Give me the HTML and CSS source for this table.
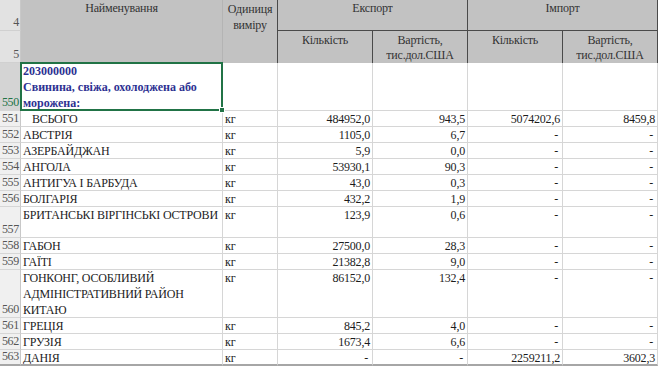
FILE: index.html
```html
<!DOCTYPE html>
<html>
<head>
<meta charset="utf-8">
<link rel="stylesheet" href="styles.css">
</head>
<body>
<div class="sheet">
  <div class="c rh rh-top r1">4</div>
  <div class="c hd hd-a">Найменування</div>
  <div class="c hd hd-b">Одиниця<br>виміру</div>
  <div class="c hd hd-grp hd-exp">Експорт</div>
  <div class="c hd hd-grp hd-imp">Імпорт</div>
  <div class="c rh rh-top r2">5</div>
  <div class="c hd hd-sub">Кількість</div>
  <div class="c hd hd-sub">Вартість,<br>тис.дол.США</div>
  <div class="c hd hd-sub">Кількість</div>
  <div class="c hd hd-sub">Вартість,<br>тис.дол.США</div>

  <div class="c rh rh-sel">550</div>
  <div class="c name group">203000000<br>Свинина, свіжа, охолоджена або<br>морожена:<span class="sel"><span class="handle"></span></span></div>
  <div class="c"></div><div class="c"></div><div class="c"></div><div class="c"></div><div class="c"></div>

  <div class="c rh">551</div><div class="c name total">ВСЬОГО</div><div class="c unit">кг</div><div class="c num">484952,0</div><div class="c num">943,5</div><div class="c num">5074202,6</div><div class="c num">8459,8</div>
  <div class="c rh">552</div><div class="c name">АВСТРІЯ</div><div class="c unit">кг</div><div class="c num">1105,0</div><div class="c num">6,7</div><div class="c num dash">-</div><div class="c num dash">-</div>
  <div class="c rh">553</div><div class="c name">АЗЕРБАЙДЖАН</div><div class="c unit">кг</div><div class="c num">5,9</div><div class="c num">0,0</div><div class="c num dash">-</div><div class="c num dash">-</div>
  <div class="c rh">554</div><div class="c name">АНГОЛА</div><div class="c unit">кг</div><div class="c num">53930,1</div><div class="c num">90,3</div><div class="c num dash">-</div><div class="c num dash">-</div>
  <div class="c rh">555</div><div class="c name">АНТИГУА І БАРБУДА</div><div class="c unit">кг</div><div class="c num">43,0</div><div class="c num">0,3</div><div class="c num dash">-</div><div class="c num dash">-</div>
  <div class="c rh">556</div><div class="c name">БОЛГАРІЯ</div><div class="c unit">кг</div><div class="c num">432,2</div><div class="c num">1,9</div><div class="c num dash">-</div><div class="c num dash">-</div>
  <div class="c rh">557</div><div class="c name">БРИТАНСЬКІ ВІРГІНСЬКІ ОСТРОВИ</div><div class="c unit">кг</div><div class="c num">123,9</div><div class="c num">0,6</div><div class="c num dash">-</div><div class="c num dash">-</div>
  <div class="c rh">558</div><div class="c name">ГАБОН</div><div class="c unit">кг</div><div class="c num">27500,0</div><div class="c num">28,3</div><div class="c num dash">-</div><div class="c num dash">-</div>
  <div class="c rh">559</div><div class="c name">ГАЇТІ</div><div class="c unit">кг</div><div class="c num">21382,8</div><div class="c num">9,0</div><div class="c num dash">-</div><div class="c num dash">-</div>
  <div class="c rh">560</div><div class="c name">ГОНКОНГ, ОСОБЛИВИЙ<br>АДМІНІСТРАТИВНИЙ РАЙОН<br>КИТАЮ</div><div class="c unit">кг</div><div class="c num">86152,0</div><div class="c num">132,4</div><div class="c num dash">-</div><div class="c num dash">-</div>
  <div class="c rh">561</div><div class="c name">ГРЕЦІЯ</div><div class="c unit">кг</div><div class="c num">845,2</div><div class="c num">4,0</div><div class="c num dash">-</div><div class="c num dash">-</div>
  <div class="c rh">562</div><div class="c name">ГРУЗІЯ</div><div class="c unit">кг</div><div class="c num">1673,4</div><div class="c num">6,6</div><div class="c num dash">-</div><div class="c num dash">-</div>
  <div class="c rh last">563</div><div class="c name last">ДАНІЯ</div><div class="c unit last">кг</div><div class="c num dash last">-</div><div class="c num dash last">-</div><div class="c num last">2259211,2</div><div class="c num last">3602,3</div>
</div>
</body>
</html>
```

FILE: styles.css
```css
* {
  box-sizing: border-box;
  margin: 0;
  padding: 0;
}

body {
  background: #ffffff;
  font-family: serif;
  font-size: 12px;
  color: #1c1c1c;
}

.sheet {
  display: grid;
  width: 658px;
  grid-template-columns: 21px 202px 55px 95px 95px 95px 95px;
  grid-template-rows: 31px 32px 48px 16px 16px 16px 16px 16px 16px 31px 16px 16px 48px 16px 16px 16px;
}

.c {
  font-family: serif;
  font-size: 12px;
  border-right: 1px solid #d6d6d6;
  border-bottom: 1px solid #d6d6d6;
  line-height: 16px;
  white-space: nowrap;
  overflow: hidden;
  letter-spacing: -0.2px;
}

/* row headers */
.rh {
  display: flex;
  align-items: flex-end;
  justify-content: flex-end;
  padding-right: 1px;
  padding-bottom: 1px;
  background: #f0f0f0;
  border-right-color: #c8c8c8;
  line-height: 13px;
  letter-spacing: -0.3px;
  color: #555555;
}

.rh-top {
  background: #e2e2e2;
  border-bottom-color: #d0d0d0;
}

.rh-sel {
  background: #d4d4d4;
  color: #217346;
  overflow: visible;
}

/* column header block */
.hd {
  background: #c2c2c2;
  color: #333333;
  text-align: center;
  line-height: 15px;
  padding-top: 1px;
}

.hd-a {
  grid-column: 2;
  grid-row: 1 / 3;
  border-right-color: #b4b4b4;
  border-bottom: none;
}

.hd-b {
  grid-column: 3;
  grid-row: 1 / 3;
  border-right-color: #4a4a4a;
  border-bottom: none;
  line-height: 16px;
}

.hd-grp {
  border-right-color: #4a4a4a;
  border-bottom-color: #4a4a4a;
  padding-top: 1px;
}

.hd-exp {
  grid-column: 4 / 6;
  grid-row: 1;
}

.hd-imp {
  grid-column: 6 / 8;
  grid-row: 1;
}

.hd-sub {
  border-right-color: #4a4a4a;
  border-bottom: none;
  padding-top: 2px;
}

/* data cells */
.name {
  padding-left: 2px;
}

.group {
  position: relative;
  overflow: visible;
  font-weight: bold;
  color: #2d3192;
  letter-spacing: 0;
}

.total {
  padding-left: 11px;
}

.unit {
  padding-left: 2px;
}

.num {
  text-align: right;
  padding-right: 2px;
}

.dash {
  padding-right: 4px;
}

.last {
  border-bottom: 2px solid #a6a6a6;
}

/* selection overlay on A550 */
.sel {
  position: absolute;
  left: -1px;
  top: -1px;
  right: -1px;
  bottom: -1px;
  border: 2px solid #217346;
}

.handle {
  position: absolute;
  right: -4px;
  bottom: -4px;
  width: 6px;
  height: 6px;
  background: #217346;
  border: 1px solid #ffffff;
}
```
